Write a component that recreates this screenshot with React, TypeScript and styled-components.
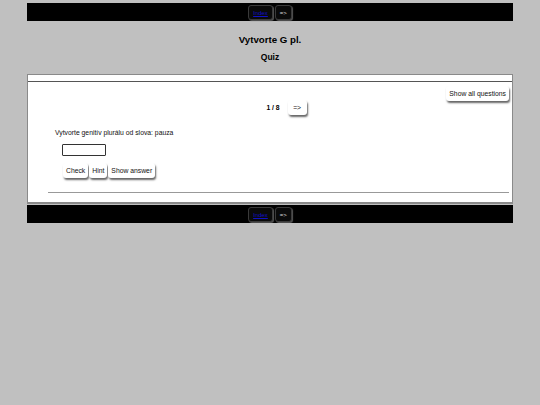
import React from 'react';
import styled, { createGlobalStyle } from 'styled-components';

const GlobalStyle = createGlobalStyle`
  html, body {
    margin: 0;
    padding: 0;
    background: #c0c0c0;
    font-family: "Liberation Sans", Arial, sans-serif;
  }
`;

const Page = styled.div`
  width: 486px;
  margin: 3px auto 0;
`;

const NavBar = styled.nav<{ $bottom?: boolean }>`
  display: flex;
  justify-content: center;
  align-items: center;
  gap: 2px;
  height: 18px;
  margin-top: ${(p) => (p.$bottom ? '1px' : '0')};
  background: #000;
  padding-top: 1px;
  box-sizing: border-box;
`;

const NavButton = styled.a<{ $link?: boolean }>`
  display: flex;
  align-items: center;
  justify-content: center;
  height: 15px;
  padding: 0 4px;
  box-sizing: border-box;
  border: 1px solid #3a3a3a;
  border-radius: 3px;
  background: #0a0a0a;
  box-shadow: 1px 1px 1px #555;
  font-size: 6px;
  color: ${(p) => (p.$link ? '#1010c8' : '#ddd')};
  text-decoration: ${(p) => (p.$link ? 'underline' : 'none')};
`;

const Title = styled.h1`
  margin: 13px 0 0;
  font-size: 9.7px;
  line-height: 12px;
  text-align: center;
`;

const Subtitle = styled.h2`
  margin: 6px 0 0;
  font-size: 8.5px;
  line-height: 10px;
  text-align: center;
`;

const Card = styled.section`
  margin-top: 12px;
  background: #fff;
  border: 1px solid #8a8a8a;
  border-bottom-width: 2px;
`;

const CardHead = styled.div`
  height: 6px;
  border-bottom: 1px solid #555;
`;

const CardBody = styled.div`
  padding: 4px 3px 9px 20px;
`;

const TopRow = styled.div`
  display: flex;
  justify-content: flex-end;
`;

const Button = styled.button`
  font-family: inherit;
  font-size: 6.8px;
  height: 15px;
  padding: 0 3px;
  background: #fff;
  color: #111;
  border: none;
  border-radius: 3px;
  box-shadow: 1px 2px 2px #666;
  cursor: pointer;
`;

const Pager = styled.div`
  display: flex;
  justify-content: center;
  align-items: center;
  gap: 8px;
  margin-top: -1px;
  padding-left: 16px;
  font-size: 6.8px;
  font-weight: bold;
`;

const WideButton = styled(Button)`
  width: 19px;
  padding: 0;
`;

const Question = styled.p`
  margin: 14px 0 0 7px;
  font-size: 6.8px;
  color: #111;
`;

const Answer = styled.input`
  display: block;
  margin: 8px 0 0 14px;
  width: 44px;
  height: 12px;
  box-sizing: border-box;
  border: 1px solid #333;
  border-radius: 1px;
  font-size: 6px;
`;

const Actions = styled.div`
  display: flex;
  gap: 1px;
  margin: 7px 0 0 15px;
`;

const Rule = styled.hr`
  margin: 14px 0 0 0;
  border: none;
  border-top: 1px solid #999;
`;

function Nav({ bottom }: { bottom?: boolean }) {
  return (
    <NavBar $bottom={bottom}>
      <NavButton $link href="#">Index</NavButton>
      <NavButton>=&gt;</NavButton>
    </NavBar>
  );
}

export default function App() {
  return (
    <>
      <GlobalStyle />
      <Page>
        <Nav />
        <Title>Vytvorte G pl.</Title>
        <Subtitle>Quiz</Subtitle>
        <Card>
          <CardHead />
          <CardBody>
            <TopRow>
              <Button>Show all questions</Button>
            </TopRow>
            <Pager>
              <span>1 / 8</span>
              <WideButton>=&gt;</WideButton>
            </Pager>
            <Question>Vytvorte genitív plurálu od slova: pauza</Question>
            <Answer type="text" />
            <Actions>
              <Button>Check</Button>
              <Button>Hint</Button>
              <Button>Show answer</Button>
            </Actions>
            <Rule />
          </CardBody>
        </Card>
        <Nav bottom />
      </Page>
    </>
  );
}
